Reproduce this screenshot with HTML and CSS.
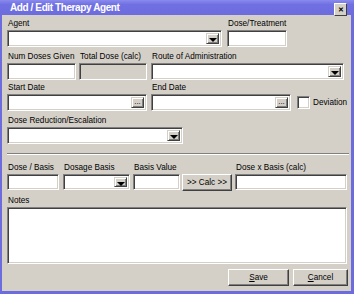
FILE: index.html
```html
<!DOCTYPE html>
<html lang="en">
<head>
    <meta charset="UTF-8">
    <title>Add / Edit Therapy Agent</title>
    <link rel="stylesheet" href="styles.css">
</head>
<body>
    <div class="window">
        <!-- title bar -->
        <div class="titlebar">
            <span class="title">Add / Edit Therapy Agent</span>
            <a href="javascript:;" class="close">&#x2715;</a>
        </div>
        <div class="content">
            <div class="row r1">
                <div class="field w215 m5">
                    <label>Agent</label>
                    <div class="box combo"><span class="drop"></span></div>
                </div>
                <div class="field w60">
                    <label>Dose/Treatment</label>
                    <div class="box"></div>
                </div>
            </div>
            <div class="row r2">
                <div class="field w69 m3">
                    <label>Num Doses Given</label>
                    <div class="box"></div>
                </div>
                <div class="field w68 m4">
                    <label>Total Dose (calc)</label>
                    <div class="box disabled"></div>
                </div>
                <div class="field w193">
                    <label>Route of Administration</label>
                    <div class="box combo"><span class="drop"></span></div>
                </div>
            </div>
            <div class="row">
                <div class="field w140 m4">
                    <label>Start Date</label>
                    <div class="box combo"><span class="dots">...</span></div>
                </div>
                <div class="field w140 m6">
                    <label>End Date</label>
                    <div class="box combo"><span class="dots">...</span></div>
                </div>
                <div class="check">
                    <span class="checkbox"></span>
                    <span>Deviation</span>
                </div>
            </div>
            <div class="row">
                <div class="field w176">
                    <label>Dose Reduction/Escalation</label>
                    <div class="box combo"><span class="drop"></span></div>
                </div>
            </div>
            <div class="sep"></div>
            <div class="row">
                <div class="field w52 m4">
                    <label>Dose / Basis</label>
                    <div class="box small"></div>
                </div>
                <div class="field w67 m3">
                    <label>Dosage Basis</label>
                    <div class="box small combo"><span class="drop"></span></div>
                </div>
                <div class="field w47 m2">
                    <label>Basis Value</label>
                    <div class="box small"></div>
                </div>
                <a href="javascript:;" class="btn calc m3">&gt;&gt; Calc &gt;&gt;</a>
                <div class="field w112">
                    <label>Dose x Basis (calc)</label>
                    <div class="box small"></div>
                </div>
            </div>
            <div class="field notes">
                <label>Notes</label>
                <div class="box area"></div>
            </div>
            <div class="actions">
                <a href="javascript:;" class="btn save"><u>S</u>ave</a>
                <a href="javascript:;" class="btn cancel"><u>C</u>ancel</a>
            </div>
        </div>
    </div>
</body>
</html>
```

FILE: styles.css
```css
body {
    margin: 0;
    padding: 0;
    font-family: "Liberation Sans", Arial, sans-serif;
    font-size: 8.2px;
    color: #000;
}
a {
    text-decoration: none;
    color: #000;
}
.window {
    width: 354px;
    height: 294px;
    box-sizing: border-box;
    background-color: #d4d0c8;
    border: 2px solid #6c6cde;
    border-top: none;
    border-right-width: 3px;
    border-bottom-width: 3px;
}
.titlebar {
    height: 15px;
    margin: 0 -3px 0 -2px;
    background: linear-gradient(#8a8aee, #7070e2 30%, #6c6cde);
    display: flex;
    align-items: center;
    justify-content: space-between;
    padding: 0 7px 0 10px;
}
.title {
    color: #fff;
    font-weight: bold;
    font-size: 10px;
    letter-spacing: -0.4px;
}
.close {
    width: 11px;
    height: 11px;
    margin-top: 3px;
    background-color: #d4d0c8;
    border: 1px solid;
    border-color: #fff #404040 #404040 #fff;
    font-size: 7px;
    line-height: 11px;
    text-align: center;
    font-weight: bold;
}
.content {
    padding: 2px 0 0 5px;
}
.row {
    display: flex;
    align-items: flex-end;
    margin-bottom: 3px;
}
.r2 {
    margin-bottom: 1px;
}
.field {
    display: flex;
    flex-direction: column;
}
.field label {
    line-height: 13px;
    height: 13px;
    white-space: nowrap;
    padding-left: 1px;
}
.m2 { margin-right: 2px; }
.m3 { margin-right: 3px; }
.m4 { margin-right: 4px; }
.m5 { margin-right: 5px; }
.m6 { margin-right: 6px; }
.w215 { width: 215px; }
.w60 { width: 60px; }
.w69 { width: 69px; }
.w68 { width: 68px; }
.w193 { width: 193px; }
.w140 { width: 140px; }
.w176 { width: 176px; }
.w52 { width: 52px; }
.w67 { width: 67px; }
.w47 { width: 47px; }
.w112 { width: 112px; }
.box {
    height: 17px;
    box-sizing: border-box;
    background-color: #fff;
    border: 1px solid;
    border-color: #808080 #fff #fff #808080;
    box-shadow: inset 1px 1px #404040, inset -1px -1px #d4d0c8;
}
.box.small {
    height: 16px;
}
.box.disabled {
    background-color: #d4d0c8;
}
.combo {
    display: flex;
    justify-content: flex-end;
    padding: 2px;
}
.drop,
.dots {
    width: 13px;
    box-sizing: border-box;
    background-color: #d4d0c8;
    border: 1px solid;
    border-color: #d4d0c8 #404040 #404040 #d4d0c8;
    box-shadow: inset 1px 1px #fff, inset -1px -1px #808080;
    position: relative;
}
.drop::after {
    content: "";
    position: absolute;
    left: 2px;
    top: 4px;
    border-left: 4px solid transparent;
    border-right: 4px solid transparent;
    border-top: 4px solid #000;
}
.dots {
    font-size: 8px;
    line-height: 8px;
    text-align: center;
    color: #000;
    overflow: hidden;
}
.check {
    display: flex;
    align-items: center;
    gap: 3px;
    height: 17px;
}
.checkbox {
    width: 13px;
    height: 13px;
    box-sizing: border-box;
    background-color: #fff;
    border: 1px solid;
    border-color: #808080 #fff #fff #808080;
    box-shadow: inset 1px 1px #404040, inset -1px -1px #d4d0c8;
}
.sep {
    margin: 9px 2px 6px 0;
    border-top: 1px solid #808080;
    border-bottom: 1px solid #fff;
}
.btn {
    display: block;
    box-sizing: border-box;
    background-color: #d4d0c8;
    border: 1px solid;
    border-color: #fff #404040 #404040 #fff;
    box-shadow: inset -1px -1px #808080;
    text-align: center;
    white-space: nowrap;
}
.calc {
    width: 50px;
    height: 17px;
    line-height: 15px;
    margin-bottom: -1px;
}
.notes {
    margin-top: 4px;
    width: 340px;
}
.box.area {
    height: 57px;
}
.actions {
    display: flex;
    justify-content: flex-end;
    gap: 4px;
    margin-top: 5px;
    padding-right: 3px;
}
.save {
    width: 61px;
    height: 17px;
    line-height: 15px;
}
.cancel {
    width: 55px;
    height: 17px;
    line-height: 15px;
}
```
